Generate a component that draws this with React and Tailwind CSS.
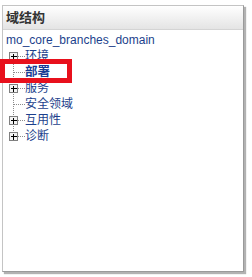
import React from 'react';

const items = [
  { label: '环境', expandable: true },
  { label: '部署', expandable: false, bold: true },
  { label: '服务', expandable: true },
  { label: '安全领域', expandable: false },
  { label: '互用性', expandable: true },
  { label: '诊断', expandable: true },
];

// connector lines + optional plus box for one tree row
const TreeGutter = ({ first, last, expandable }) => (
  <svg width="19" height="16" className="shrink-0" shapeRendering="crispEdges">
    <line
      x1="7.5" y1={first ? 8 : 0} x2="7.5" y2={last ? 8 : 16}
      stroke="#8c8c8c" strokeDasharray="1 1"
    />
    <line x1="8" y1="8.5" x2="19" y2="8.5" stroke="#8c8c8c" strokeDasharray="1 1" />
    {expandable && (
      <g>
        <rect x="3.5" y="4.5" width="8" height="8" fill="#f4f4f4" stroke="#808080" />
        <line x1="5" y1="8.5" x2="11" y2="8.5" stroke="#000" />
        <line x1="7.5" y1="6" x2="7.5" y2="12" stroke="#000" />
      </g>
    )}
  </svg>
);

export default function App() {
  return (
    <div className="relative w-[252px] h-[277px] bg-white pt-[5px] pl-[2px]" style={{ fontFamily: '"Liberation Sans", "Noto Sans CJK SC", sans-serif' }}>
      <div className="w-[242px] h-[267px] border border-[#c4c4c4] border-r-[#9a9a9a] border-b-[#9a9a9a] shadow-[2px_2px_1px_rgba(0,0,0,0.3)] bg-white">
        <div className="h-[24px] flex items-center px-[3px] bg-gradient-to-b from-white to-[#e4e4e4] border-b border-[#d4d4d4]">
          <span className="text-[13px] font-bold text-[#333]">域结构</span>
        </div>
        <div className="pt-[2px] pl-[3px]">
          <div className="h-[16px] leading-[16px] text-[12px] text-[#1c3f8c]">mo_core_branches_domain</div>
          <div className="flex flex-col">
            {items.map((it, i) => (
              <div key={it.label} className="flex items-center h-[16px]">
                <TreeGutter first={i === 0} last={i === items.length - 1} expandable={it.expandable} />
                <span className={`leading-[16px] ${it.bold ? 'text-[12.5px] font-bold text-[#173b94]' : 'text-[12px] text-[#1c3f8c]'}`}>
                  {it.label}
                </span>
              </div>
            ))}
          </div>
        </div>
      </div>
      {/* red highlight drawn over the tree */}
      <div className="absolute left-0 top-[59px] w-[72px] h-[24px] border-[5px] border-[#e8101c]" />
    </div>
  );
}
